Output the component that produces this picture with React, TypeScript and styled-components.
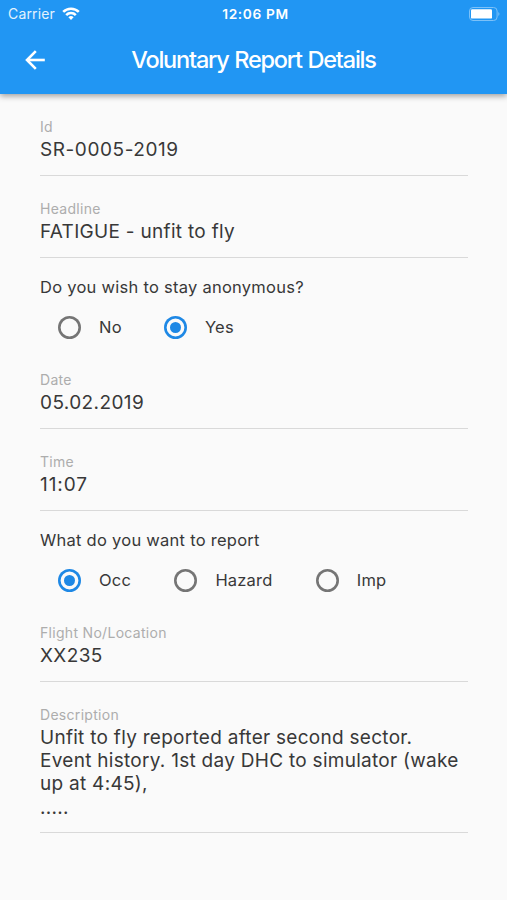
import React from "react";
import styled, { createGlobalStyle } from "styled-components";

const GlobalStyle = createGlobalStyle`
  * { box-sizing: border-box; }
  html, body { margin: 0; padding: 0; background: #fafafa; }
  body { font-family: Inter, "Liberation Sans", sans-serif; color: #383838; }
`;

const Screen = styled.div`
  width: 507px;
  height: 900px;
  overflow: hidden;
  background: #fafafa;
`;

const Header = styled.header`
  height: 94px;
  background: #2196f3;
  color: #fff;
  box-shadow: 0 2px 6px rgba(0, 0, 0, 0.38);
`;

const StatusBar = styled.div`
  height: 27px;
  display: grid;
  grid-template-columns: 1fr auto 1fr;
  align-items: center;
  padding: 0 7px 0 8px;
  font-size: 14px;
  line-height: 26px;
`;

const Carrier = styled.div`
  display: flex;
  align-items: center;
  gap: 7px;
  color: #e3f2fd;
  letter-spacing: 0.15px;
`;

const Clock = styled.div`
  padding-left: 3px;
  font-size: 13.7px;
  font-weight: 600;
  letter-spacing: 0.65px;
`;

const BatteryHolder = styled.div`
  display: flex;
  justify-content: flex-end;
`;

const TitleBar = styled.div`
  height: 66px;
  display: grid;
  grid-template-columns: 70px 1fr 70px;
  align-items: center;
`;

const BackButton = styled.button`
  height: 60px;
  display: flex;
  align-items: center;
  justify-content: center;
  border: 0;
  padding: 0;
  background: transparent;
  color: #fff;
`;

const Title = styled.h1`
  margin: 0;
  text-align: center;
  font-size: 23.5px;
  font-weight: 500;
  line-height: 30px;
  letter-spacing: -1.2px;
  word-spacing: 0.5px;
  white-space: nowrap;
`;

const Form = styled.main`
  padding: 0 39px 0 40px;
`;

const Field = styled.section`
  padding: 24px 0 14px;
  border-bottom: 1px solid #d9d9d9;
  &:last-of-type {
    padding-bottom: 13px;
  }
`;

const FieldLabel = styled.div`
  font-size: 14px;
  line-height: 18px;
  letter-spacing: 0.3px;
  color: #adadad;
`;

const FieldValue = styled.div<{ $tracking: number }>`
  margin-top: 1.6px;
  font-size: 19px;
  line-height: 23.4px;
  letter-spacing: ${(p) => p.$tracking}px;
  white-space: pre-line;
`;

const Choice = styled.section`
  padding-top: 17px;
  height: 89px;
`;

const Question = styled.div`
  font-size: 16.5px;
  line-height: 24px;
  letter-spacing: 0.26px;
`;

const Options = styled.div<{ $gap: number }>`
  display: flex;
  gap: ${(p) => p.$gap}px;
  padding: 16px 0 0 18px;
`;

const Option = styled.label`
  display: flex;
  align-items: center;
  gap: 18px;
  height: 24px;
  font-size: 16.5px;
  letter-spacing: 0.2px;
`;

const Radio = styled.span<{ $on?: boolean }>`
  width: 23px;
  height: 23px;
  display: grid;
  place-items: center;
  border-radius: 50%;
  box-shadow: inset 0 0 0 2.6px ${(p) => (p.$on ? "#1e88e5" : "#757575")};
  &::after {
    content: "";
    width: 11px;
    height: 11px;
    border-radius: 50%;
    background: ${(p) => (p.$on ? "#1e88e5" : "transparent")};
  }
`;

function WifiIcon() {
  return (
    <svg width="18" height="13" viewBox="0 0 18 13" fill="none" stroke="#fff" strokeWidth="2.5">
      <path d="M1.2 4.9 C5.4 .6 12.6 .6 16.8 4.9" />
      <path d="M4.2 8.1 C6.8 5.4 11.2 5.4 13.8 8.1" />
      <path d="M6.4 10.2 Q9 7.9 11.6 10.2 L9 12.9 Z" fill="#fff" stroke="none" />
    </svg>
  );
}

function BatteryIcon() {
  return (
    <svg width="31" height="14" viewBox="0 0 31 14">
      <rect x="0.5" y="0.5" width="27.6" height="13" rx="3.5" fill="none" stroke="#7cc1f8" strokeWidth="1" />
      <rect x="2" y="2.2" width="21" height="9.4" rx="1.2" fill="#fff" />
      <path d="M29.3 5 Q31.6 7 29.3 9 Z" fill="#7cc1f8" />
    </svg>
  );
}

function BackIcon() {
  return (
    <svg width="20" height="20" viewBox="0 0 20 20" fill="none" stroke="#fff" strokeWidth="2.6">
      <path d="M19.8 10 H2" />
      <path d="M10.8 1.2 L2 10 L10.8 18.8" />
    </svg>
  );
}

function TextField({ label, value, tracking = 0.3 }: { label: string; value: string; tracking?: number }) {
  return (
    <Field>
      <FieldLabel>{label}</FieldLabel>
      <FieldValue $tracking={tracking}>{value}</FieldValue>
    </Field>
  );
}

interface RadioGroupProps {
  question: string;
  options: string[];
  selected: string;
  gap?: number;
}

function RadioGroup({ question, options, selected, gap = 43 }: RadioGroupProps) {
  return (
    <Choice>
      <Question>{question}</Question>
      <Options $gap={gap}>
        {options.map((o) => (
          <Option key={o}>
            <Radio $on={o === selected} />
            {o}
          </Option>
        ))}
      </Options>
    </Choice>
  );
}

export default function App() {
  return (
    <Screen>
      <GlobalStyle />
      <Header>
        <StatusBar>
          <Carrier>
            Carrier
            <WifiIcon />
          </Carrier>
          <Clock>12:06 PM</Clock>
          <BatteryHolder>
            <BatteryIcon />
          </BatteryHolder>
        </StatusBar>
        <TitleBar>
          <BackButton aria-label="Back">
            <BackIcon />
          </BackButton>
          <Title>Voluntary Report Details</Title>
        </TitleBar>
      </Header>
      <Form>
        <TextField label="Id" value="SR-0005-2019" tracking={0.57} />
        <TextField label="Headline" value="FATIGUE - unfit to fly" />
        <RadioGroup question="Do you wish to stay anonymous?" options={["No", "Yes"]} selected="Yes" gap={42.2} />
        <TextField label="Date" value="05.02.2019" tracking={0.4} />
        <TextField label="Time" value="11:07" tracking={0.9} />
        <RadioGroup
          question="What do you want to report"
          options={["Occ", "Hazard", "Imp"]}
          selected="Occ"
          gap={43.3}
        />
        <TextField label="Flight No/Location" value="XX235" tracking={0.4} />
        <TextField
          label="Description"
          tracking={0.28}
          value={"Unfit to fly reported after second sector.\nEvent history. 1st day DHC to simulator (wake up at 4:45),\n....."}
        />
      </Form>
    </Screen>
  );
}
